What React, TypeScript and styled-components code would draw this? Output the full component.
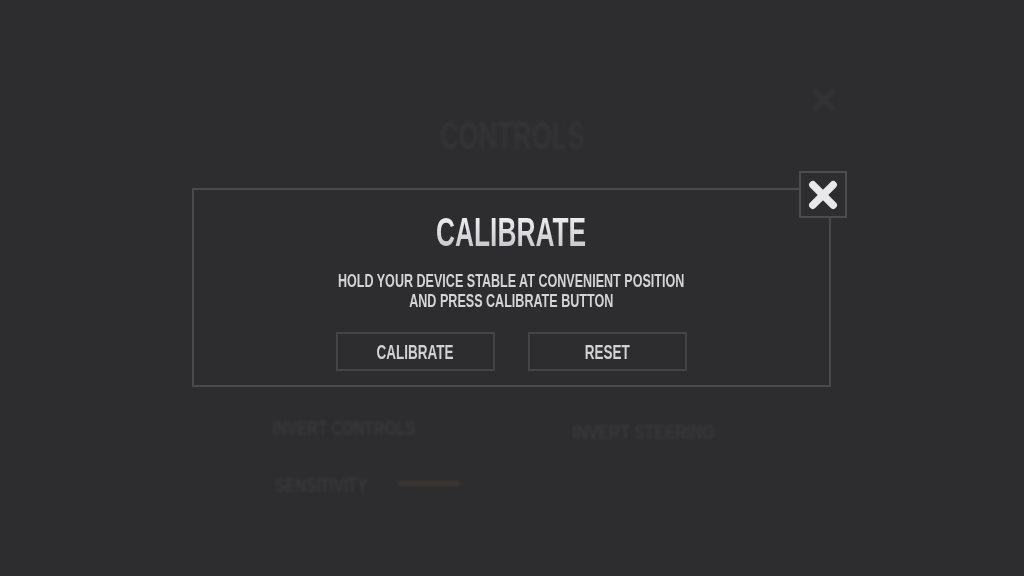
import React from "react";
import styled, { createGlobalStyle } from "styled-components";

const GlobalStyle = createGlobalStyle`
  html, body { margin: 0; padding: 0; background: #2d2d2f; }
  * { box-sizing: border-box; }
`;

const Screen = styled.div`
  position: relative;
  width: 1024px;
  height: 576px;
  overflow: hidden;
  background: #2d2d2f;
  font-family: "Liberation Sans", Arial, sans-serif;
  font-weight: 700;
`;

const BgLayer = styled.div`
  display: flex;
  flex-direction: column;
  filter: blur(1.4px);
`;

const TopBar = styled.div`
  display: flex;
  justify-content: flex-end;
  padding: 88px 188px 0 0;
  height: 112px;
`;

const BgTitle = styled.div`
  margin-top: 4px;
  text-align: center;
  font-size: 39px;
  line-height: 40px;
  color: #343437;
`;

const SettingsGrid = styled.div`
  margin-top: 256px;
  padding-left: 272px;
  display: grid;
  grid-template-columns: 300px auto;
  row-gap: 29px;
`;

const SettingLabel = styled.div<{ $offset?: number }>`
  font-size: 21px;
  line-height: 24px;
  color: #38383b;
  padding-top: ${(p) => p.$offset ?? 0}px;
  display: flex;
  align-items: center;
  white-space: nowrap;
`;

const LabelBox = styled.div<{ $width: number }>`
  width: ${(p) => p.$width}px;
  padding-left: 3px;
  overflow: visible;
`;

const Slider = styled.div`
  width: 62px;
  height: 5px;
  margin-top: -4px;
  background: #3d3731;
  border-radius: 2px;
`;

const Condensed = styled.span<{ $sx: number; $origin?: string }>`
  display: inline-block;
  white-space: nowrap;
  transform: scaleX(${(p) => p.$sx});
  transform-origin: ${(p) => p.$origin ?? "center"};
`;

const Dialog = styled.div`
  position: absolute;
  left: 192px;
  top: 188px;
  width: 639px;
  height: 199px;
  border: 2px solid #4a4a4c;
  background: #2d2d2f;
  display: flex;
  flex-direction: column;
  align-items: center;
  padding-top: 20px;
`;

const DialogTitle = styled.div`
  font-size: 40px;
  line-height: 44px;
  text-align: center;
  & > span {
    background: linear-gradient(180deg, #f4f4f6 0%, #dadade 55%, #bdbdc2 100%);
    -webkit-background-clip: text;
    background-clip: text;
    color: transparent;
  }
`;

const Message = styled.div`
  margin-top: 17px;
  font-size: 18.5px;
  line-height: 20px;
  color: #d4d4d6;
  text-align: center;
  display: flex;
  flex-direction: column;
  align-items: center;
`;

const ButtonRow = styled.div`
  margin-top: 21px;
  display: flex;
  gap: 33px;
`;

const ActionButton = styled.button`
  width: 159px;
  height: 39px;
  border: 2px solid #444446;
  background: transparent;
  color: #d2d2d4;
  font-family: "Liberation Sans", Arial, sans-serif;
  font-weight: 700;
  font-size: 20px;
  line-height: 20px;
  padding: 0;
  display: flex;
  align-items: center;
  justify-content: center;
  cursor: pointer;
`;

const CloseButton = styled.button`
  position: absolute;
  top: -19px;
  right: -18px;
  width: 48px;
  height: 47px;
  border: 2px solid #4c4c4e;
  background: #2d2d2f;
  padding: 0;
  display: flex;
  align-items: center;
  justify-content: center;
  cursor: pointer;
`;

const XIcon = ({ size, color, stroke }: { size: number; color: string; stroke: number }) => (
  <svg width={size} height={size} viewBox="0 0 28 28">
    <g stroke={color} strokeWidth={stroke} strokeLinecap="round">
      <line x1="4.5" y1="4.5" x2="23.5" y2="23.5" />
      <line x1="23.5" y1="4.5" x2="4.5" y2="23.5" />
    </g>
  </svg>
);

export default function App() {
  return (
    <>
      <GlobalStyle />
      <Screen>
        <BgLayer>
          <TopBar>
            <XIcon size={24} color="#343437" stroke={6} />
          </TopBar>
          <BgTitle>
            <Condensed $sx={0.66}>CONTROLS</Condensed>
          </BgTitle>
          <SettingsGrid>
            <SettingLabel>
              <Condensed $sx={0.715} $origin="left">INVERT CONTROLS</Condensed>
            </SettingLabel>
            <SettingLabel $offset={8}>
              <Condensed $sx={0.75} $origin="left">INVERT STEERING</Condensed>
            </SettingLabel>
            <SettingLabel>
              <LabelBox $width={126}>
                <Condensed $sx={0.72} $origin="left">SENSITIVITY</Condensed>
              </LabelBox>
              <Slider />
            </SettingLabel>
          </SettingsGrid>
        </BgLayer>

        <Dialog>
          <CloseButton aria-label="Close">
            <XIcon size={30} color="#e8e8ea" stroke={7} />
          </CloseButton>
          <DialogTitle>
            <Condensed $sx={0.658}>CALIBRATE</Condensed>
          </DialogTitle>
          <Message>
            <Condensed $sx={0.679}>HOLD YOUR DEVICE STABLE AT CONVENIENT POSITION</Condensed>
            <Condensed $sx={0.679}>AND PRESS CALIBRATE BUTTON</Condensed>
          </Message>
          <ButtonRow>
            <ActionButton>
              <Condensed $sx={0.675}>CALIBRATE</Condensed>
            </ActionButton>
            <ActionButton>
              <Condensed $sx={0.675}>RESET</Condensed>
            </ActionButton>
          </ButtonRow>
        </Dialog>
      </Screen>
    </>
  );
}
